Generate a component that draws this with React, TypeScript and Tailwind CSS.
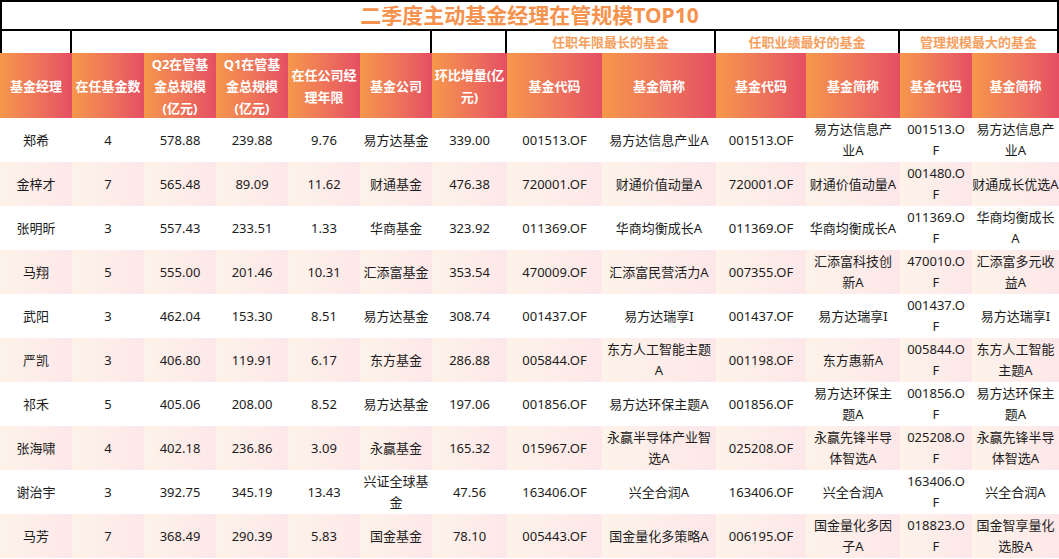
import * as React from "react";

type Row = string[];

const COLS =
  "grid grid-cols-[72px_72px_72px_72px_72px_72px_75px_95px_114px_90px_94px_72px_87px]";

const HEADERS = [
  "基金经理",
  "在任基金数",
  "Q2在管基\n金总规模\n(亿元)",
  "Q1在管基\n金总规模\n(亿元)",
  "在任公司经\n理年限",
  "基金公司",
  "环比增量(亿\n元)",
  "基金代码",
  "基金简称",
  "基金代码",
  "基金简称",
  "基金代码",
  "基金简称",
];

// line breaks follow the wrapping in the source sheet
const ROWS: Row[] = [
  ["郑希", "4", "578.88", "239.88", "9.76", "易方达基金", "339.00", "001513.OF", "易方达信息产业A", "001513.OF", "易方达信息产\n业A", "001513.O\nF", "易方达信息产\n业A"],
  ["金梓才", "7", "565.48", "89.09", "11.62", "财通基金", "476.38", "720001.OF", "财通价值动量A", "720001.OF", "财通价值动量A", "001480.O\nF", "财通成长优选A"],
  ["张明昕", "3", "557.43", "233.51", "1.33", "华商基金", "323.92", "011369.OF", "华商均衡成长A", "011369.OF", "华商均衡成长A", "011369.O\nF", "华商均衡成长\nA"],
  ["马翔", "5", "555.00", "201.46", "10.31", "汇添富基金", "353.54", "470009.OF", "汇添富民营活力A", "007355.OF", "汇添富科技创\n新A", "470010.O\nF", "汇添富多元收\n益A"],
  ["武阳", "3", "462.04", "153.30", "8.51", "易方达基金", "308.74", "001437.OF", "易方达瑞享I", "001437.OF", "易方达瑞享I", "001437.O\nF", "易方达瑞享I"],
  ["严凯", "3", "406.80", "119.91", "6.17", "东方基金", "286.88", "005844.OF", "东方人工智能主题\nA", "001198.OF", "东方惠新A", "005844.O\nF", "东方人工智能\n主题A"],
  ["祁禾", "5", "405.06", "208.00", "8.52", "易方达基金", "197.06", "001856.OF", "易方达环保主题A", "001856.OF", "易方达环保主\n题A", "001856.O\nF", "易方达环保主\n题A"],
  ["张海啸", "4", "402.18", "236.86", "3.09", "永赢基金", "165.32", "015967.OF", "永赢半导体产业智\n选A", "025208.OF", "永赢先锋半导\n体智选A", "025208.O\nF", "永赢先锋半导\n体智选A"],
  ["谢治宇", "3", "392.75", "345.19", "13.43", "兴证全球基\n金", "47.56", "163406.OF", "兴全合润A", "163406.OF", "兴全合润A", "163406.O\nF", "兴全合润A"],
  ["马芳", "7", "368.49", "290.39", "5.83", "国金基金", "78.10", "005443.OF", "国金量化多策略A", "006195.OF", "国金量化多因\n子A", "018823.O\nF", "国金智享量化\n选股A"],
];

const GROUPS = ["任职年限最长的基金", "任职业绩最好的基金", "管理规模最大的基金"];

export default function App() {
  return (
    <div className="w-[1059px] h-[559px] overflow-hidden bg-white font-['Noto_Sans','Noto_Sans_CJK_SC',sans-serif]">
      {/* Title */}
      <div className="flex h-[31px] items-center justify-center border-2 border-black">
        <h1 className="text-[21px] font-bold leading-none text-[#f5924e]">
          二季度主动基金经理在管规模TOP10
        </h1>
      </div>

      {/* Group row */}
      <div className={`${COLS} h-[22px]`}>
        <div className="border-x-2 border-black" />
        <div className="col-span-5 border-r-2 border-black" />
        <div className="border-r-2 border-black" />
        {GROUPS.map((g) => (
          <div
            key={g}
            className="col-span-2 flex items-center justify-center border-r-2 border-black text-[13px] font-bold leading-none text-[#f5a060]"
          >
            {g}
          </div>
        ))}
      </div>

      {/* Header row */}
      <div className={`${COLS} h-[65px]`}>
        {HEADERS.map((h, i) => (
          <div
            key={i}
            className="flex items-center justify-center bg-linear-to-r from-[#f6974a] to-[#e54e63] text-center"
          >
            <span className="whitespace-pre text-[13px] font-bold leading-[22px] text-white">
              {h}
            </span>
          </div>
        ))}
      </div>

      {/* Data rows */}
      {ROWS.map((row, r) => (
        <div key={r} className={`${COLS} h-[44px]`}>
          {row.map((cell, c) => (
            <div
              key={c}
              className={
                r % 2 === 1
                  ? "flex items-center justify-center bg-linear-to-r from-[#fdf3ea] to-[#fde7e9] text-center"
                  : "flex items-center justify-center bg-white text-center"
              }
            >
              <span className="whitespace-pre text-[13px] leading-[21px] text-[#1c1c1c]">
                {cell}
              </span>
            </div>
          ))}
        </div>
      ))}
    </div>
  );
}
